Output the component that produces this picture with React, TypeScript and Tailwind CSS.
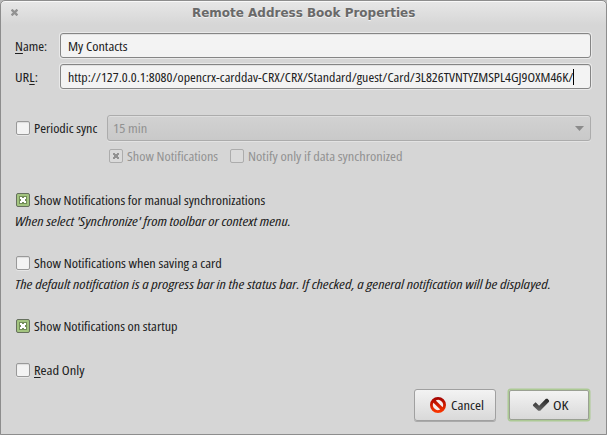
import { useLayoutEffect, useRef, useState, type ReactNode } from "react";

/* Text squeezed horizontally to a fixed advance width. */
function Fit({ width, className = "", children }: { width: number; className?: string; children: ReactNode }) {
  const ref = useRef<HTMLSpanElement>(null);
  const [scale, setScale] = useState(1);
  useLayoutEffect(() => {
    if (ref.current) setScale(width / ref.current.offsetWidth);
  }, [width]);
  return (
    <span className={`block h-[18px] shrink-0 leading-[18px] ${className}`} style={{ width }}>
      <span
        ref={ref}
        className="inline-block origin-left whitespace-nowrap"
        style={{ transform: `scaleX(${scale})` }}
      >
        {children}
      </span>
    </span>
  );
}

function Key({ children }: { children: ReactNode }) {
  return <span className="underline decoration-1 underline-offset-[2px] [text-decoration-skip-ink:none]">{children}</span>;
}

function CheckBox({ checked = false, disabled = false }: { checked?: boolean; disabled?: boolean }) {
  const look = disabled
    ? "border-[#acacac] bg-[#dadada]"
    : checked
      ? "border-[#66705e] bg-[#a3c47f]"
      : "border-[#999] bg-[#f3f3f3] shadow-[inset_0_1px_1px_#dcdcdc,0_1px_0_#e6e6e6]";
  return (
    <span className={`flex size-[14px] shrink-0 items-center justify-center rounded-[2px] border ${look}`}>
      {checked && (
        <svg width="8" height="8" viewBox="0 0 8 8" shapeRendering="crispEdges">
          {!disabled && <path d="M0 0h8v8H0z" fill="#728d58" />}
          <path
            d="M1 1h2v1h2V1h2v2H6v2h1v2H5V6H3v1H1V5h1V3H1z"
            fill={disabled ? "#929292" : "#fff"}
          />
        </svg>
      )}
    </span>
  );
}

function Field({ children }: { children: ReactNode }) {
  return (
    <div className="flex h-[25px] w-[531px] items-center rounded-[3px] border border-[#858585] bg-[#f3f3f3] pl-[7px] shadow-[inset_0_1px_0_#e2e2e2,0_0_0_1px_#e9e9e9]">
      {children}
    </div>
  );
}

export default function App() {
  return (
    <div className="h-[435px] w-[607px] overflow-hidden bg-[#b9b9b9] font-['Open_Sans','Noto_Sans',sans-serif] text-[12.75px] text-[#202020] [font-stretch:75%]">
      <div className="flex h-full flex-col rounded-t-[5px] border border-[#8d8d8d] bg-[#d6d6d6] bg-[linear-gradient(#e7e7e7,#d6d6d6_24px)] shadow-[inset_0_1px_0_#f8f8f8]">
        <header className="flex h-8 shrink-0 items-start pl-[10px]">
          <svg className="mt-2 shrink-0" width="7" height="7" viewBox="0 0 7 7">
            <path d="M.6.6l5.8 5.8M6.4.6L.6 6.4" stroke="#929292" strokeWidth="2.3" />
          </svg>
          <Fit width={223} className="mt-[3px] ml-[174px] font-['DejaVu_Sans',sans-serif] text-[12px] font-bold text-[#696969] [text-shadow:0_1px_0_#f2f2f2]">
            Remote Address Book Properties
          </Fit>
        </header>

        <div className="flex h-[25px] shrink-0 items-center pl-[14px]">
          <div className="w-[45px]"><Fit width={32}><Key>N</Key>ame:</Fit></div>
          <Field><Fit width={59}>My Contacts</Fit></Field>
        </div>
        <div className="mt-[6px] flex h-[25px] shrink-0 items-center pl-[14px]">
          <div className="w-[45px]"><Fit width={23}>UR<Key>L</Key>:</Fit></div>
          <Field>
            <Fit width={505}>http://127.0.0.1:8080/opencrx-carddav-CRX/CRX/Standard/guest/Card/3L826TVNTYZMSPL4GJ9OXM46K/</Fit>
            <span className="h-4 w-px bg-black" />
          </Field>
        </div>

        <div className="mt-[26px] flex h-[26px] shrink-0 items-center pl-[15px]">
          <CheckBox />
          <div className="ml-1 w-[73px]"><Fit width={63}>Periodic sync</Fit></div>
          <div className="flex h-[26px] w-[484px] items-center justify-between rounded-[3px] border border-[#acacac] bg-linear-to-b from-[#d2d2d2] to-[#c9c9c9] pr-[6px] pl-[5px] text-[#929292] shadow-[inset_0_1px_0_#dedede,0_1px_0_#e3e3e3]">
            <Fit width={34}>15 min</Fit>
            <svg width="9" height="5" viewBox="0 0 9 5"><path d="M0 0h9L4.5 5z" fill="#8b8b8b" /></svg>
          </div>
        </div>
        <div className="mt-[6px] flex h-[18px] shrink-0 items-center pl-[108px] text-[#929292]">
          <CheckBox checked disabled />
          <Fit width={91} className="ml-1">Show Notifications</Fit>
          <span className="w-3" />
          <CheckBox disabled />
          <Fit width={154} className="ml-1">Notify only if data synchronized</Fit>
        </div>

        <div className="mt-[26px] flex h-[18px] shrink-0 items-center pl-[15px]">
          <CheckBox checked />
          <Fit width={231} className="ml-1">Show Notifications for manual synchronizations</Fit>
        </div>
        <Fit width={276} className="mt-[3px] ml-[14px] italic">When select 'Synchronize' from toolbar or context menu.</Fit>

        <div className="mt-6 flex h-[18px] shrink-0 items-center pl-[15px]">
          <CheckBox />
          <Fit width={188} className="ml-1">Show Notifications when saving a card</Fit>
        </div>
        <Fit width={536} className="mt-[3px] ml-[14px] italic">
          The default notification is a progress bar in the status bar. If checked, a general notification will be displayed.
        </Fit>

        <div className="mt-6 flex h-[18px] shrink-0 items-center pl-[15px]">
          <CheckBox checked />
          <Fit width={144} className="ml-1">Show Notifications on startup</Fit>
        </div>
        <div className="mt-[26px] flex h-[18px] shrink-0 items-center pl-[15px]">
          <CheckBox />
          <Fit width={50} className="ml-1"><Key>R</Key>ead Only</Fit>
        </div>

        <div className="mt-[10px] flex h-8 shrink-0 pl-[413px]">
          <button className="flex h-8 w-[82px] items-center rounded-[3px] border border-[#a0a0a0] bg-linear-to-b from-[#f3f3f3] to-[#d9d9d9] pl-[15px] shadow-[0_1px_0_#aaa]">
            <svg width="16" height="16" viewBox="0 0 16 16">
              <defs>
                <linearGradient id="stop" x1="0" y1="0" x2="0" y2="1">
                  <stop stopColor="#a00000" />
                  <stop offset="1" stopColor="#ff3900" />
                </linearGradient>
              </defs>
              <circle cx="8" cy="8" r="6.5" fill="#f5eeee" />
              <path fill="url(#stop)" fillRule="evenodd" d="M8 0a8 8 0 1 0 0 16A8 8 0 0 0 8 0zM5.8 3.4a5.1 5.1 0 0 1 6.8 6.8zM3.4 5.8l6.8 6.8a5.1 5.1 0 0 1-6.8-6.8z" />
            </svg>
            <Fit width={33} className="ml-[5px] text-left">Cancel</Fit>
          </button>
          <button className="ml-[13px] flex h-[30px] w-[80px] items-center self-center rounded-[2px] border border-[#9aa093] bg-linear-to-b from-[#f3f3f3] to-[#d9d9d9] pl-[22px] shadow-[0_0_0_1.5px_#acc994]">
            <svg className="shrink-0" width="18" height="16" viewBox="0 0 19 16">
              <defs>
                <linearGradient id="tick" x1="0" y1="0" x2="0" y2="1">
                  <stop stopColor="#262626" />
                  <stop offset="1" stopColor="#686868" />
                </linearGradient>
              </defs>
              <path fill="url(#tick)" d="M1 7.8L3.8 5l3.7 3.8 7.2-7.3h1.7L18 3.2v1.5L8.7 14H6.6L1 8.8z" />
            </svg>
            <Fit width={16} className="ml-[3px] text-left">OK</Fit>
          </button>
        </div>
      </div>
    </div>
  );
}
